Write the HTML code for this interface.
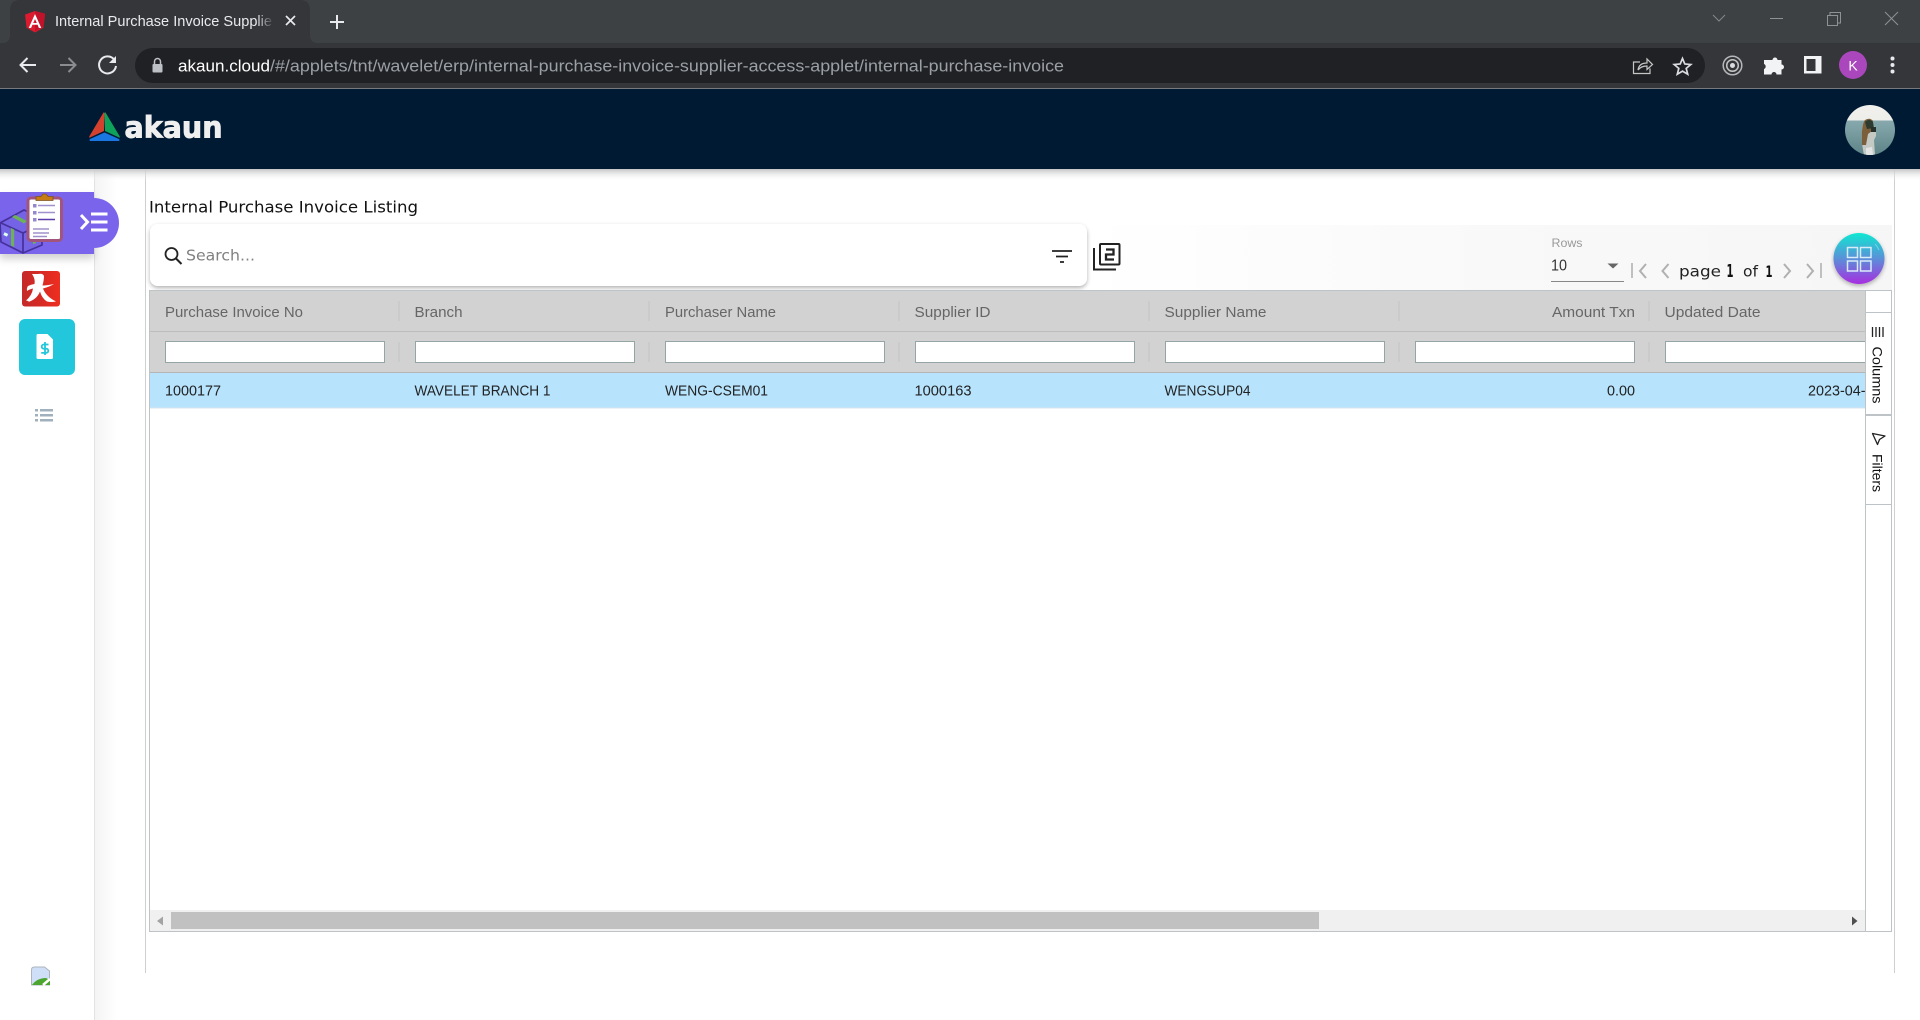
<!DOCTYPE html>
<html lang="en">
<head>
<meta charset="utf-8">
<title>Internal Purchase Invoice Supplier Access</title>
<style>
html,body{margin:0;padding:0;width:1920px;height:1020px;overflow:hidden;background:#fff}
svg{display:block;position:absolute;left:0;top:0}
text{font-family:"Liberation Sans",sans-serif;white-space:pre}
.h{font-size:14.5px;fill:#666}
.c{font-size:14.5px;fill:#222}
.p{font-family:"DejaVu Sans",sans-serif}
</style>
</head>
<body>
<svg width="1920" height="1020" viewBox="0 0 1920 1020" xmlns="http://www.w3.org/2000/svg">
<defs>
  <linearGradient id="fade" x1="0" x2="1"><stop offset="0" stop-color="#35363a" stop-opacity="0"/><stop offset="1" stop-color="#35363a"/></linearGradient>
  <linearGradient id="side" x1="0" x2="1"><stop offset="0" stop-color="#f4f4f4"/><stop offset="1" stop-color="#fff"/></linearGradient>
  <linearGradient id="hs" x1="0" x2="0" y1="0" y2="1"><stop offset="0" stop-color="#c4c4c4"/><stop offset="1" stop-color="#fff" stop-opacity="0"/></linearGradient>
  <linearGradient id="tb" x1="0" x2="1"><stop offset="0" stop-color="#fff"/><stop offset=".5" stop-color="#f9f9f9"/><stop offset="1" stop-color="#f6f6f6"/></linearGradient>
  <linearGradient id="orb" x1="0" x2="0" y1="0" y2="1"><stop offset="0" stop-color="#10e8d2"/><stop offset=".5" stop-color="#5a90d8"/><stop offset="1" stop-color="#a82ee0"/></linearGradient>
  <linearGradient id="red" x1="0" x2="1"><stop offset="0" stop-color="#c42a2a"/><stop offset=".45" stop-color="#d42a24"/><stop offset="1" stop-color="#ee2e20"/></linearGradient>
  <linearGradient id="sea" x1="0" x2="0" y1="0" y2="1"><stop offset="0" stop-color="#f1f0ec"/><stop offset=".3" stop-color="#eeeeea"/><stop offset=".32" stop-color="#87a9ad"/><stop offset="1" stop-color="#5d8488"/></linearGradient>
  <clipPath id="av"><circle cx="1870" cy="130" r="25"/></clipPath>
  <clipPath id="gridclip"><rect x="150" y="291" width="1715" height="640"/></clipPath>
  <filter id="sh" x="-5%" y="-20%" width="110%" height="150%"><feDropShadow dx="0" dy="2" stdDeviation="2" flood-color="#000" flood-opacity=".3"/></filter>
  <filter id="sh2" x="-20%" y="-20%" width="140%" height="150%"><feDropShadow dx="0" dy="5" stdDeviation="4" flood-color="#000" flood-opacity=".18"/></filter>
</defs>

<!-- browser chrome -->
<rect width="1920" height="43" fill="#3e4144"/>
<rect y="43" width="1920" height="45" fill="#35363a"/>
<rect y="88" width="1920" height="1" fill="#77797c"/>
<path d="M0 43h1920v1H0z" fill="#35363a"/>
<path d="M2 43q8 0 8-8V10q0-10 10-10h280q10 0 10 10v25q0 8 8 8z" fill="#35363a"/>
<path d="M35 11l-10 3.600 1.600 13.200 8.400 4.700 8.400-4.700 1.600-13.200z" fill="#dd1b2f"/>
<path d="M35 11v20.500l8.400-4.700 1.600-13.200z" fill="#c2122a"/>
<path d="M35 14l-6.300 14h2.400l1.300-3.200h5.200l1.300 3.200h2.400zm0 5l1.800 4h-3.600z" fill="#fff"/>
<text x="55" y="26" font-size="14.500" fill="#e8eaed" textLength="217" lengthAdjust="spacingAndGlyphs">Internal Purchase Invoice Supplie</text>
<rect x="256" y="8" width="18" height="26" fill="url(#fade)"/>
<path d="M286 16l9 9m0-9l-9 9" stroke="#e8eaed" stroke-width="1.700" fill="none"/>
<path d="M337 15v14m-7-7h14" stroke="#e8eaed" stroke-width="2" fill="none"/>
<path d="M1713 15l6 6 6-6" stroke="#85888b" fill="none" stroke-width="1"/>
<path d="M1770 18.500h13" stroke="#8f9295" fill="none"/>
<path d="M1827.500 15.500h10v10h-10zM1830 15v-2.500h10.500v10.500h-2.800" stroke="#8f9295" fill="none"/>
<path d="M1885 12l13 13m0-13l-13 13" stroke="#8f9295" fill="none"/>

<path d="M36 65h-15m6.500-7l-7 7 7 7" stroke="#e8eaed" stroke-width="2" fill="none"/>
<path d="M60 65h15m-6.500-7l7 7-7 7" stroke="#8a8c8f" stroke-width="2" fill="none"/>
<path d="M114.500 60a8.500 8.500 0 1 0 1.500 6" stroke="#e8eaed" stroke-width="2" fill="none"/>
<path d="M116 56v7h-7z" fill="#e8eaed"/>
<rect x="135" y="48" width="1570" height="35" rx="17.500" fill="#202124"/>
<rect x="152.500" y="64" width="10" height="8.500" rx="1" fill="#bdc1c6"/>
<path d="M154.500 64v-2.500a3 3 0 0 1 6 0V64" stroke="#bdc1c6" stroke-width="1.500" fill="none"/>
<text x="178" y="71.500" font-size="17" fill="#fff" textLength="92" lengthAdjust="spacingAndGlyphs">akaun.cloud</text>
<text x="270" y="71.500" font-size="17" fill="#9aa0a6" textLength="794" lengthAdjust="spacingAndGlyphs">/#/applets/tnt/wavelet/erp/internal-purchase-invoice-supplier-access-applet/internal-purchase-invoice</text>
<path d="M1640 62h-6.500v11.500h16.500v-5" stroke="#c4c7c5" stroke-width="1.200" fill="none"/>
<path d="M1638 70q1-7 9-7v-4l5.500 5.500-5.500 5v-3.500q-6 0-9 4z" stroke="#c4c7c5" stroke-width="1.200" fill="none"/>
<path d="M1682.500 58.500l2.300 5.500 6 .5-4.600 3.900 1.500 5.800-5.200-3.100-5.200 3.100 1.500-5.800-4.600-3.900 6-.5z" stroke="#dadce0" stroke-width="1.700" fill="none"/>
<circle cx="1732.500" cy="65.500" r="9.300" stroke="#b5b7ba" stroke-width="1.500" fill="none"/>
<circle cx="1732.500" cy="65.500" r="5.800" stroke="#c4c7c5" stroke-width="1.500" fill="none"/>
<circle cx="1732.500" cy="65.500" r="2.500" fill="#dadce0"/>
<path d="M1769 60h3.500a2.500 2.500 0 0 1 5 0h4v4.500a2.500 2.500 0 0 1 0 5v5h-5a2.500 2.500 0 0 0-5 0h-7.500v-5.500a2.700 2.700 0 0 0 0-5V60z" fill="#f1f3f4"/>
<rect x="1804" y="56" width="17.500" height="17.500" fill="#f1f3f4"/>
<rect x="1806.500" y="59" width="9" height="12" fill="#35363a"/>
<circle cx="1853" cy="65" r="14" fill="#ab47bc"/>
<text x="1853" y="70.500" font-size="14" fill="#fff" text-anchor="middle">K</text>
<circle cx="1892.500" cy="58.500" r="2" fill="#e8eaed"/><circle cx="1892.500" cy="65" r="2" fill="#e8eaed"/><circle cx="1892.500" cy="71.500" r="2" fill="#e8eaed"/>

<!-- page backgrounds -->
<rect x="95" y="169" width="22" height="851" fill="url(#side)"/>
<rect x="94" y="169" width="1" height="851" fill="#e2e2e2"/>
<rect x="145" y="169" width="1" height="804" fill="#cfcfcf"/>
<rect x="1894" y="169" width="1" height="804" fill="#cfcfcf"/>
<rect y="169" width="1920" height="12" fill="url(#hs)"/>

<!-- app header -->
<rect y="89" width="1920" height="80" fill="#001a33"/>
<path d="M103.500 112.500Q104.500 112 104.500 114L104 131 90 137.500Q88.500 138 89.500 136z" fill="#d4412e"/>
<path d="M105.500 112.500Q104.500 112 104.500 114L105 131 119 137.500Q120.500 138 119.500 136z" fill="#0ea25b"/>
<path d="M104.500 132.500L90 139q-1 1 0 2h29q1-1 0-2z" fill="#1a76e0"/>
<text class="p" x="124.500" y="137.500" font-size="29" font-weight="bold" fill="#efefef" stroke="#efefef" stroke-width=".9" textLength="98" lengthAdjust="spacingAndGlyphs">akaun</text>
<g clip-path="url(#av)">
  <rect x="1845" y="105" width="50" height="50" fill="url(#sea)"/>
  <path d="M1864 155q-3-14-2-22 0-12 5-13 5-1 6 5l3 3v8l-2 4 1 15z" fill="#c5c9c4"/>
  <path d="M1862 145q-1-20 3-25 5-3 8 1l-1 10-4 3-2 11z" fill="#7a5f3a"/>
  <path d="M1865 122q4-4 8 0l1 6-7 1z" fill="#2c3a30"/>
  <rect x="1871" y="127" width="5" height="5" fill="#26302c"/>
  <path d="M1866 148l6-1 1 8h-7z" fill="#e2e4e4"/>
</g>

<!-- sidebar -->
<rect x="0" y="192" width="94" height="62" fill="#7a64ec" filter="url(#sh2)"/>
<rect x="0" y="192" width="94" height="62" fill="#7a64ec"/>
<path d="M94 198a25 25 0 0 1 0 50z" fill="#7a64ec"/>
<g stroke="#46309c" stroke-width="1.700" fill="#7a64ec" stroke-linejoin="round">
  <path d="M0 223l24-13 18 8v27l-19 8-22-11z" fill="#7563e6"/>
  <path d="M1 223l22 10 19-9M23 233v20" fill="none"/>
</g>
<path d="M12 217l3-2 12 6-3 2.500z" fill="#6cb257"/>
<path d="M11 228l3.200 1.500v17.500l-3.200-1.500z" fill="#6cb257"/>
<path d="M33 229h3v14l-3 1.300z" fill="#6cb257"/>
<rect x="4" y="233" width="4" height="3" fill="#dfe" transform="rotate(25 6 234)"/>
<rect x="28" y="198" width="33.500" height="42.500" rx="3" fill="#fff" stroke="#a2557c" stroke-width="3"/>
<path d="M36 200.500v-4h5l2-2.500h3l2 2.500h5v4z" fill="#c67c12" stroke="#7c5220" stroke-width=".8"/>
<g fill="#9587cf">
  <rect x="33" y="204" width="3.500" height="3.500"/><rect x="33" y="211" width="3.500" height="3.500"/><rect x="33" y="218" width="3.500" height="3.500"/>
</g>
<g stroke="#a090cc" stroke-width="1.500"><path d="M38 205.500h17M38 212.500h17"/><path d="M38 219.500h17" stroke="#5c3ca8"/><path d="M33 229h16M33 233h16M33 236.500h14"/></g>
<path d="M81 215l6.500 7-6.500 7" stroke="#fff" stroke-width="3" fill="none"/>
<path d="M91 214h16.500M91 222h16.500M91 230h16.500" stroke="#fff" stroke-width="3"/>

<rect x="22" y="271" width="38" height="35.500" rx="3" fill="url(#red)"/>
<path d="M38 274q5-1 6 2 0 4-1.500 9.500 5 0 11.500-1.500-5 3-11 4.500 3 8 13 13-5 1-9 0-5-3-7-10-3 8-13 11 4-1-1-2 6-5 7-12-4 1-6 2.500-.5-3 1-5 3-1.500 6.500-2 1-5-2.500-10z" fill="#fff"/>

<rect x="19" y="319" width="56" height="56" rx="6" fill="#22c7dc"/>
<path d="M38 334h9.500l5.500 5.500V357.500q0 1.500-1.500 1.500H38q-1.500 0-1.500-1.500V335.500q0-1.500 1.500-1.500z" fill="#fff"/>
<path d="M48.500 344.500h-4.700a1.900 1.900 0 0 0 0 4.200h2.400a1.900 1.900 0 0 1 0 4.200h-5M45 342v13" stroke="#22c7dc" stroke-width="1.800" fill="none"/>
<g fill="#a0b0bc">
  <rect x="35" y="409" width="3" height="2.500"/><rect x="35" y="414" width="3" height="2.500"/><rect x="35" y="419" width="3" height="2.500"/>
  <rect x="40" y="409" width="13" height="2.500"/><rect x="40" y="414" width="13" height="2.500"/><rect x="40" y="419" width="13" height="2.500"/>
</g>
<path d="M31.500 985v-15q0-3 3-3h10l5 4v14z" fill="#cfdff7" stroke="#aeb4bc" stroke-width="1"/>
<path d="M32 985q5-7 14-7l4 2v5z" fill="#4ba52f"/>
<path d="M43 985l7-6" stroke="#fff" stroke-width="2.500"/>

<!-- title -->
<text class="p" x="149" y="212.500" font-size="16" fill="#111" textLength="269" lengthAdjust="spacingAndGlyphs">Internal Purchase Invoice Listing</text>

<!-- toolbar -->
<rect x="1087" y="225" width="805" height="65" fill="url(#tb)"/>
<rect x="150" y="224" width="937" height="62" rx="8" fill="#fff" filter="url(#sh)"/>
<circle cx="171.500" cy="254" r="6" stroke="#222" stroke-width="1.800" fill="none"/>
<path d="M176 258.500l5.500 5.500" stroke="#222" stroke-width="2"/>
<text class="p" x="186" y="260.500" font-size="15.500" fill="#808080" textLength="69" lengthAdjust="spacingAndGlyphs">Search...</text>
<path d="M1052 251h20M1056 256.500h12M1060 262h4" stroke="#222" stroke-width="1.800"/>
<path d="M1094 248v21.500h22" stroke="#222" stroke-width="2" fill="none"/>
<rect x="1100" y="244" width="19.500" height="20.500" rx="1" stroke="#222" stroke-width="2" fill="#fff"/>
<path d="M1106 249.500h7.500v5h-7.500v5h8" stroke="#222" stroke-width="2.300" fill="none"/>

<text x="1551.500" y="247" font-size="12" fill="#999" textLength="31" lengthAdjust="spacingAndGlyphs">Rows</text>
<text x="1551" y="270.500" font-size="16" fill="#333" textLength="16" lengthAdjust="spacingAndGlyphs">10</text>
<path d="M1607.500 263.500h11l-5.500 5z" fill="#666"/>
<rect x="1551" y="281" width="73" height="1" fill="#888"/>
<path d="M1632 263v15" stroke="#c0c0c0" stroke-width="2"/>
<path d="M1646 264l-6 7 6 7M1668.500 264l-6 7 6 7M1784 264l6 7-6 7M1807 264l6 7-6 7" stroke="#b0b0b0" stroke-width="2" fill="none"/>
<path d="M1821 263v15" stroke="#c0c0c0" stroke-width="2"/>
<text class="p" x="1679" y="276.500" font-size="15.500" fill="#222" textLength="42" lengthAdjust="spacingAndGlyphs">page</text>
<text class="p" x="1726.500" y="277" font-size="18" font-weight="bold" fill="#111" textLength="7" lengthAdjust="spacingAndGlyphs">1</text>
<text class="p" x="1743" y="276.500" font-size="15.500" fill="#222" textLength="15" lengthAdjust="spacingAndGlyphs">of</text>
<text class="p" x="1765.500" y="277" font-size="16" font-weight="bold" fill="#111" textLength="7" lengthAdjust="spacingAndGlyphs">1</text>
<circle cx="1859" cy="258.500" r="25.500" fill="url(#orb)" filter="url(#sh)"/>
<g stroke="#d8ecf8" stroke-width="1.500" fill="none">
  <rect x="1847.500" y="247.500" width="10" height="10"/><rect x="1860.500" y="247.500" width="10.500" height="10"/>
  <rect x="1847.500" y="261" width="10" height="10"/><rect x="1860.500" y="261" width="10.500" height="10"/>
</g>
<path d="M1875 244a22 22 0 0 1 4 6" stroke="#b8f4f0" stroke-width="1" fill="none" opacity=".45"/>

<!-- grid -->
<rect x="149.500" y="290.500" width="1742" height="641" fill="#fff" stroke="#bdc3c7"/>
<g clip-path="url(#gridclip)">
  <rect x="150" y="291" width="1715" height="40" fill="#d2d2d2"/>
  <rect x="150" y="331" width="1715" height="1" fill="#bdbdbd"/>
  <rect x="150" y="332" width="1715" height="40" fill="#d2d2d2"/>
  <rect x="150" y="372" width="1715" height="1" fill="#b5b5b5"/>
  <rect x="150" y="373" width="1715" height="34.500" fill="#b7e3fd"/>
  <rect x="150" y="407.500" width="1715" height="1" fill="#d8e4ec"/>
  <g fill="#c4c4c4">
    <rect x="398.500" y="301" width="1" height="20"/><rect x="648.500" y="301" width="1" height="20"/><rect x="898.500" y="301" width="1" height="20"/><rect x="1148.500" y="301" width="1" height="20"/><rect x="1398.500" y="301" width="1" height="20"/><rect x="1648.500" y="301" width="1" height="20"/>
    <rect x="398.500" y="342" width="1" height="20"/><rect x="648.500" y="342" width="1" height="20"/><rect x="898.500" y="342" width="1" height="20"/><rect x="1148.500" y="342" width="1" height="20"/><rect x="1398.500" y="342" width="1" height="20"/><rect x="1648.500" y="342" width="1" height="20"/>
  </g>
  <g fill="#fff" stroke="#95a5a6">
    <rect x="165.500" y="341.500" width="219" height="21"/><rect x="415.500" y="341.500" width="219" height="21"/><rect x="665.500" y="341.500" width="219" height="21"/><rect x="915.500" y="341.500" width="219" height="21"/><rect x="1165.500" y="341.500" width="219" height="21"/><rect x="1415.500" y="341.500" width="219" height="21"/><rect x="1665.500" y="341.500" width="219" height="21"/>
  </g>
  <text class="h" x="165" y="317" textLength="138" lengthAdjust="spacingAndGlyphs">Purchase Invoice No</text>
  <text class="h" x="414.500" y="317" textLength="48" lengthAdjust="spacingAndGlyphs">Branch</text>
  <text class="h" x="665" y="317" textLength="111" lengthAdjust="spacingAndGlyphs">Purchaser Name</text>
  <text class="h" x="914.500" y="317" textLength="76" lengthAdjust="spacingAndGlyphs">Supplier ID</text>
  <text class="h" x="1164.500" y="317" textLength="102" lengthAdjust="spacingAndGlyphs">Supplier Name</text>
  <text class="h" x="1552" y="317" textLength="83" lengthAdjust="spacingAndGlyphs">Amount Txn</text>
  <text class="h" x="1664.500" y="317" textLength="96" lengthAdjust="spacingAndGlyphs">Updated Date</text>
  <text class="c" x="165" y="395.500" textLength="56" lengthAdjust="spacingAndGlyphs">1000177</text>
  <text class="c" x="414.500" y="395.500" textLength="136" lengthAdjust="spacingAndGlyphs">WAVELET BRANCH 1</text>
  <text class="c" x="665" y="395.500" textLength="103" lengthAdjust="spacingAndGlyphs">WENG-CSEM01</text>
  <text class="c" x="914.500" y="395.500" textLength="57" lengthAdjust="spacingAndGlyphs">1000163</text>
  <text class="c" x="1164.500" y="395.500" textLength="86" lengthAdjust="spacingAndGlyphs">WENGSUP04</text>
  <text class="c" x="1607" y="395.500" textLength="28" lengthAdjust="spacingAndGlyphs">0.00</text>
  <text class="c" x="1808" y="395.500" textLength="73.500" lengthAdjust="spacingAndGlyphs">2023-04-06</text>
  <rect x="150" y="910" width="1715" height="21" fill="#f0f0f0"/>
  <rect x="171" y="912" width="1148" height="17" fill="#c1c1c1"/>
  <path d="M163 916.500v9l-6-4.500z" fill="#a3a3a3"/>
  <path d="M1852 916.500v9l5.500-4.500z" fill="#505050"/>
</g>

<!-- side panel -->
<rect x="1865" y="291" width="1" height="640" fill="#bdc3c7"/>
<rect x="1866" y="312" width="25" height="1" fill="#bdc3c7"/>
<rect x="1866" y="414" width="25" height="2" fill="#bdc3c7"/>
<rect x="1866" y="504" width="25" height="1" fill="#bdc3c7"/>
<path d="M1872.500 327v10M1876 327v10M1879.500 327v10M1883 327v10" stroke="#222" stroke-width="1.300"/>
<text transform="translate(1872.500 346.500) rotate(90)" font-size="13.500" fill="#111" textLength="57" lengthAdjust="spacingAndGlyphs">Columns</text>
<path d="M1872.500 433.500l12.500 2.500-5.500 3.500-2 5z" stroke="#222" stroke-width="1.300" fill="none" stroke-linejoin="round"/>
<text transform="translate(1872.500 454) rotate(90)" font-size="13.500" fill="#111" textLength="38" lengthAdjust="spacingAndGlyphs">Filters</text>
</svg>
</body>
</html>
